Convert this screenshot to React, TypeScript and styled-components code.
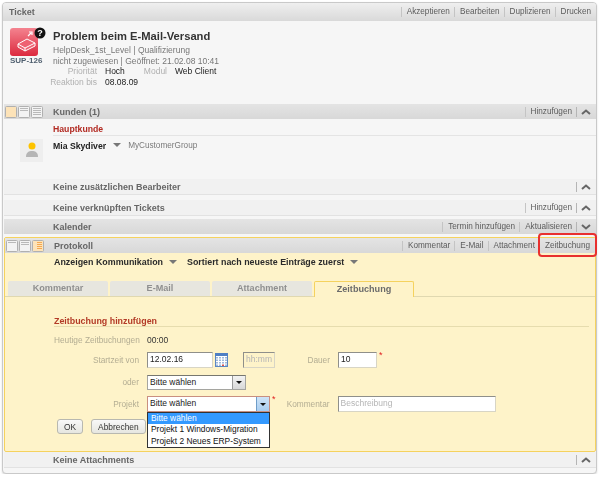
import React from 'react';
import styled, { createGlobalStyle } from 'styled-components';

const Global = createGlobalStyle`
  html, body {
    margin: 0;
    padding: 0;
    background: #ffffff;
  }
  body {
    font-family: "Liberation Sans", Arial, sans-serif;
    font-size: 8.5px;
    color: #333333;
  }
`;

const Frame = styled.div`
  position: relative;
  box-sizing: border-box;
  width: 595px;
  height: 472px;
  margin: 2px 0 0 2px;
  background: #f6f6f6;
  border: 1px solid #c9c9c9;
  border-radius: 4px;
  box-shadow: 0 1px 2px rgba(0, 0, 0, 0.15);
  filter: blur(0.4px);
`;

const TicketBar = styled.div`
  display: flex;
  align-items: center;
  justify-content: space-between;
  height: 18px;
  padding: 0 1px 0 6px;
  background: linear-gradient(#efefef, #d9d9d9);
  border-radius: 3px 3px 0 0;
`;

const TicketHeading = styled.span`
  font-size: 9px;
  font-weight: bold;
  color: #666666;
`;

const Actions = styled.div`
  display: flex;
  align-items: center;
`;

const Action = styled.span`
  display: block;
  height: 10px;
  line-height: 10px;
  padding: 0 4px 0 5px;
  border-left: 1px solid #c4c4c4;
  font-size: 8.2px;
  color: #5c5c5c;
  white-space: nowrap;
`;

const Chevron = styled.span`
  display: flex;
  align-items: center;
  justify-content: center;
  width: 17px;
  height: 10px;
  border-left: 1px solid #b5b5b5;
  color: #666666;
  svg {
    display: block;
  }
`;

const TicketBody = styled.div`
  display: flex;
  height: 83px;
  padding: 6px 0 0 7px;
  box-sizing: border-box;
`;

const TicketIconColumn = styled.div`
  width: 43px;
  flex: none;
`;

const TicketIcon = styled.svg`
  display: block;
  width: 39px;
  height: 30px;
`;

const TicketKey = styled.div`
  margin-top: -1px;
  width: 32px;
  font-size: 8px;
  line-height: 10px;
  font-weight: bold;
  color: #4f5f6f;
  white-space: nowrap;
  text-align: center;
`;

const TicketInfo = styled.div`
  display: flex;
  flex-direction: column;
  padding-top: 2px;
`;

const Title = styled.h1`
  margin: 0 0 2px;
  font-size: 11.2px;
  line-height: 14px;
  font-weight: bold;
  color: #333333;
`;

const InfoLine = styled.div`
  font-size: 8.5px;
  line-height: 10.7px;
  color: #777777;
`;

const MetaGrid = styled.div`
  display: grid;
  grid-template-columns: 44px 24px 30px auto;
  column-gap: 8px;
  line-height: 11px;
  font-size: 8.5px;
  justify-content: start;
`;

const MetaLabel = styled.span`
  color: #b0b0b0;
  text-align: right;
  white-space: nowrap;
  direction: rtl;
`;

const MetaValue = styled.span`
  color: #222222;
  white-space: nowrap;
`;

const Bar = styled.div<{ $tone?: 'dark' | 'light' }>`
  display: flex;
  align-items: center;
  box-sizing: border-box;
  height: ${(p) => (p.$tone === 'light' ? 16 : 15)}px;
  margin: 0 0 0 1px;
  padding-right: 2px;
  background: ${(p) => (p.$tone === 'light' ? '#f1f1f1' : 'linear-gradient(#e4e4e4, #d8d8d8)')};
  border-bottom: ${(p) => (p.$tone === 'light' ? '1px solid #e2e2e2' : 'none')};
`;

const ToggleGroup = styled.div`
  display: flex;
  gap: 1px;
  width: 49px;
  padding-left: 1px;
  box-sizing: border-box;
  flex: none;
`;

const BarTitle = styled.span`
  flex: 1;
  font-size: 9px;
  font-weight: bold;
  color: #666666;
  white-space: nowrap;
`;

const Toggle = styled.svg`
  display: block;
  width: 12px;
  height: 12px;
`;

const CustomerBody = styled.div`
  height: 60px;
  padding: 5px 0 0 50px;
  box-sizing: border-box;
`;

const SmallHeading = styled.div`
  font-size: 8.7px;
  line-height: 11px;
  font-weight: bold;
  color: #b22a22;
  border-bottom: 1px solid #e4e4e4;
`;

const CustomerRow = styled.div`
  display: flex;
  align-items: flex-start;
  gap: 7px;
  margin: 3px 0 0 -33px;
`;

const Avatar = styled.svg`
  display: block;
  width: 23px;
  height: 23px;
  flex: none;
  margin-right: 3px;
`;

const CustomerName = styled.span`
  font-size: 8.7px;
  line-height: 14px;
  font-weight: bold;
  color: #222222;
`;

const CustomerGroup = styled.span`
  font-size: 8.2px;
  line-height: 14px;
  color: #7a7a7a;
`;

const Caret = styled.i`
  display: inline-block;
  width: 0;
  height: 0;
  border-style: solid;
  border-width: 4px 4px 0;
  border-color: #777777 transparent transparent;
`;

const CaretCell = styled.span`
  display: flex;
  align-items: center;
  height: 12px;
`;

const Gap = styled.div<{ $h: number }>`
  height: ${(p) => p.$h}px;
`;

const Protokoll = styled.div`
  height: 215px;
  margin-left: 1px;
  border: 1px solid #f5d25e;
  border-radius: 2px;
  background: #fef3c9;
  box-sizing: border-box;
`;

const ProtokollBar = styled.div`
  display: flex;
  align-items: center;
  height: 15px;
  padding-right: 1px;
  background: linear-gradient(#e4e4e4, #d8d8d8);
`;

const Filters = styled.div`
  display: flex;
  align-items: center;
  gap: 6px;
  height: 17px;
  padding-left: 49px;
  font-size: 8.9px;
  font-weight: bold;
  color: #2b2b2b;
  span + i + span {
    margin-left: 4px;
  }
`;

const Tabs = styled.div`
  display: flex;
  gap: 2px;
  height: 15px;
  margin-top: 11px;
  padding-left: 3px;
  border-bottom: 1px solid #e0d8b0;
`;

const Tab = styled.div<{ $active?: boolean }>`
  box-sizing: border-box;
  width: 100px;
  height: ${(p) => (p.$active ? '16px' : '15px')};
  line-height: ${(p) => (p.$active ? '14px' : '15px')};
  text-align: center;
  font-size: 9.1px;
  font-weight: bold;
  background: ${(p) => (p.$active ? '#fef3c9' : '#e7e6df')};
  color: ${(p) => (p.$active ? '#6b6b6b' : '#8f8f8f')};
  border: ${(p) => (p.$active ? '1px solid #f5d25e' : 'none')};
  border-bottom: none;
  border-radius: 2px 2px 0 0;
`;

const Form = styled.div`
  padding: 19px 0 0 49px;
`;

const FormHeading = styled.div`
  margin-right: 6px;
  font-size: 8.9px;
  line-height: 10px;
  font-weight: bold;
  color: #b33a26;
  border-bottom: 1px solid #e6dcae;
`;

const Row = styled.div<{ $h: number }>`
  display: flex;
  align-items: center;
  height: ${(p) => p.$h}px;
`;

const FieldLabel = styled.label<{ $w?: number; $left?: boolean }>`
  flex: none;
  width: ${(p) => p.$w ?? 85}px;
  margin-right: 8px;
  font-size: 8.3px;
  color: #b3ad93;
  text-align: ${(p) => (p.$left ? 'left' : 'right')};
  white-space: nowrap;
`;

const StaticValue = styled.span`
  font-size: 8.5px;
  color: #333333;
`;

const Input = styled.div<{ $w: number; $muted?: boolean; $hint?: boolean }>`
  box-sizing: border-box;
  width: ${(p) => p.$w}px;
  height: 16px;
  flex: none;
  margin-left: ${(p) => (p.$hint ? 15 : 0)}px;
  line-height: 13px;
  padding-left: 2px;
  background: ${(p) => (p.$hint ? 'transparent' : '#ffffff')};
  border: 1px solid #d8d5c5;
  border-top-color: #8f8f8a;
  border-left-color: #8f8f8a;
  font-size: 8.5px;
  color: ${(p) => (p.$muted || p.$hint ? '#b5b5b5' : '#222222')};
`;

const Star = styled.sup`
  align-self: flex-start;
  margin: 2px 0 0 2px;
  font-size: 9px;
  line-height: 8px;
  color: #e02020;
`;

const Select = styled.div<{ $w: number; $open?: boolean }>`
  position: relative;
  box-sizing: border-box;
  display: flex;
  justify-content: space-between;
  flex: none;
  width: ${(p) => p.$w}px;
  height: ${(p) => (p.$open ? 16 : 15)}px;
  background: #ffffff;
  border: 1px solid ${(p) => (p.$open ? '#c98f80' : '#a5a5a0')};
  border-top-color: ${(p) => (p.$open ? '#c98f80' : '#77776f')};
  font-size: 8.5px;
  line-height: 13px;
  padding-left: 2px;
  color: #222222;
`;

const SelectArrow = styled.span<{ $open?: boolean }>`
  display: flex;
  align-items: center;
  justify-content: center;
  width: 12px;
  background: ${(p) => (p.$open ? 'linear-gradient(#cfe4f7, #a8cdf0)' : 'linear-gradient(#f3f3f3, #d8d8d8)')};
  border-left: 1px solid ${(p) => (p.$open ? '#6f9dc8' : '#9a9a9a')};
  &::after {
    content: '';
    border-style: solid;
    border-width: 3px 3px 0;
    border-color: #111111 transparent transparent;
  }
`;

const Dropdown = styled.ul`
  position: absolute;
  left: -1px;
  top: 15px;
  z-index: 2;
  width: 123px;
  margin: 0;
  padding: 0;
  box-sizing: border-box;
  list-style: none;
  background: #ffffff;
  border: 1px solid #333333;
`;

const DropdownItem = styled.li<{ $active?: boolean }>`
  height: 11.4px;
  line-height: 11.4px;
  padding-left: 3px;
  font-size: 8.4px;
  white-space: nowrap;
  color: ${(p) => (p.$active ? '#ffffff' : '#111111')};
  background: ${(p) => (p.$active ? '#3399ff' : 'transparent')};
`;

const ButtonRow = styled.div`
  display: flex;
  gap: 8px;
  margin: 4px 0 0 3px;
`;

const Button = styled.button`
  box-sizing: border-box;
  height: 15px;
  padding: 0 6px;
  min-width: 24px;
  background: linear-gradient(#f8f8f8, #e6e6e0);
  border: 1px solid #b8b8b0;
  border-radius: 3px;
  font-family: inherit;
  font-size: 8.4px;
  color: #333333;
`;

const Highlight = styled.div`
  position: absolute;
  left: 535px;
  top: 230px;
  width: 59px;
  height: 24px;
  border: 2px solid #e8302e;
  border-radius: 4px;
  box-sizing: border-box;
`;

const Calendar = styled.svg`
  display: block;
  flex: none;
  width: 13px;
  height: 14px;
  margin-left: 2px;
`;

function ChevronIcon({ up = true }: { up?: boolean }) {
  return (
    <Chevron>
      <svg width="10" height="6" viewBox="0 0 10 6">
        <path d={up ? 'M1 5 L5 1.5 L9 5' : 'M1 1 L5 4.5 L9 1'} fill="none" stroke="currentColor" strokeWidth="2" />
      </svg>
    </Chevron>
  );
}

function ToggleIcon({ lines, active }: { lines: number; active?: boolean }) {
  const rows = [3, 5, 7, 9].slice(0, lines);
  return (
    <Toggle viewBox="0 0 12 12">
      <rect x="0.5" y="0.5" width="11" height="11" rx="1" fill={active ? '#fde3b8' : '#f3f3f3'} stroke="#b0b0b0" />
      {rows.map((y) => (
        <rect key={y} x={active && lines === 4 ? 5 : 2} y={y - 1} width={active && lines === 4 ? 5 : 8} height="1" fill={active ? '#f5a850' : '#b9b9b9'} />
      ))}
    </Toggle>
  );
}

function Views({ active }: { active: number }) {
  return (
    <ToggleGroup>
      <ToggleIcon lines={active === 0 ? 0 : 1} active={active === 0} />
      <ToggleIcon lines={2} />
      <ToggleIcon lines={4} active={active === 2} />
    </ToggleGroup>
  );
}

function BarActions({ items, chevron }: { items: string[]; chevron?: 'up' | 'down' }) {
  return (
    <Actions>
      {items.map((item) => (
        <Action key={item}>{item}</Action>
      ))}
      {chevron && <ChevronIcon up={chevron === 'up'} />}
    </Actions>
  );
}

function CalendarIcon() {
  return (
    <Calendar viewBox="0 0 13 14">
      <rect x="0.5" y="0.5" width="12" height="13" fill="#ffffff" stroke="#5b86c2" />
      <rect x="0" y="0" width="13" height="3" fill="#4f7fc4" />
      {[4.5, 7, 9.5, 12].map((y) =>
        [1, 4, 7, 10].map((x) => (
          <rect key={`${x}-${y}`} x={x} y={y - 0.5} width="2" height="1.5" fill={x === 7 && y === 12 ? '#d9534f' : '#9db8dc'} />
        )),
      )}
    </Calendar>
  );
}

export default function App() {
  return (
    <>
      <Global />
      <Frame>
        <TicketBar>
          <TicketHeading>Ticket</TicketHeading>
          <BarActions items={['Akzeptieren', 'Bearbeiten', 'Duplizieren', 'Drucken']} />
        </TicketBar>

        <TicketBody>
          <TicketIconColumn>
            <TicketIcon viewBox="0 0 39 30">
              <defs>
                <linearGradient id="red" x1="0" y1="0" x2="0" y2="1">
                  <stop offset="0" stopColor="#f4838f" />
                  <stop offset="1" stopColor="#dc2a3f" />
                </linearGradient>
              </defs>
              <rect x="0" y="1" width="28" height="28" rx="3" fill="url(#red)" />
              <path d="M8 17 L17 12 L25 16 L25 19 L15 24 L8 20 Z" fill="#ee6272" stroke="#ffffff" strokeWidth="1" />
              <path d="M8 17 L15 21 L25 16 M15 21 L15 24" fill="none" stroke="#ffffff" strokeWidth="1" />
              <path d="M18 9 L21 6 M19 5 h3 v3" fill="none" stroke="#ffffff" strokeWidth="1.2" />
              <circle cx="30" cy="6" r="5.5" fill="#111111" />
              <text x="30" y="9.3" textAnchor="middle" fontSize="9" fontWeight="bold" fill="#ffffff" fontFamily="Liberation Sans">?</text>
            </TicketIcon>
            <TicketKey>SUP-126</TicketKey>
          </TicketIconColumn>
          <TicketInfo>
            <Title>Problem beim E-Mail-Versand</Title>
            <InfoLine>HelpDesk_1st_Level | Qualifizierung</InfoLine>
            <InfoLine>nicht zugewiesen | Geöffnet: 21.02.08 10:41</InfoLine>
            <MetaGrid>
              <MetaLabel>Priorität</MetaLabel>
              <MetaValue>Hoch</MetaValue>
              <MetaLabel>Modul</MetaLabel>
              <MetaValue>Web Client</MetaValue>
              <MetaLabel>Reaktion bis</MetaLabel>
              <MetaValue>08.08.09</MetaValue>
            </MetaGrid>
          </TicketInfo>
        </TicketBody>

        <Bar>
          <Views active={0} />
          <BarTitle>Kunden (1)</BarTitle>
          <BarActions items={['Hinzufügen']} chevron="up" />
        </Bar>
        <CustomerBody>
          <SmallHeading>Hauptkunde</SmallHeading>
          <CustomerRow>
            <Avatar viewBox="0 0 23 23">
              <rect width="23" height="23" fill="#eeeeee" />
              <circle cx="12" cy="7" r="3.5" fill="#fdc300" />
              <path d="M6 18 C6 13 9 12 12 12 C15 12 18 13 18 18 Z" fill="#b5b5b5" />
            </Avatar>
            <CustomerName>Mia Skydiver</CustomerName>
            <CaretCell><Caret /></CaretCell>
            <CustomerGroup>MyCustomerGroup</CustomerGroup>
          </CustomerRow>
        </CustomerBody>

        <Bar $tone="light">
          <ToggleGroup />
          <BarTitle>Keine zusätzlichen Bearbeiter</BarTitle>
          <BarActions items={[]} chevron="up" />
        </Bar>
        <Gap $h={5} />
        <Bar $tone="light">
          <ToggleGroup />
          <BarTitle>Keine verknüpften Tickets</BarTitle>
          <BarActions items={['Hinzufügen']} chevron="up" />
        </Bar>
        <Gap $h={3} />
        <Bar>
          <ToggleGroup />
          <BarTitle>Kalender</BarTitle>
          <BarActions items={['Termin hinzufügen', 'Aktualisieren']} chevron="down" />
        </Bar>
        <Gap $h={3} />

        <Protokoll>
          <ProtokollBar>
            <Views active={2} />
            <BarTitle>Protokoll</BarTitle>
            <BarActions items={['Kommentar', 'E-Mail', 'Attachment', 'Zeitbuchung']} />
          </ProtokollBar>
          <Filters>
            <span>Anzeigen Kommunikation</span>
            <Caret />
            <span>Sortiert nach neueste Einträge zuerst</span>
            <Caret />
          </Filters>
          <Tabs>
            <Tab>Kommentar</Tab>
            <Tab>E-Mail</Tab>
            <Tab>Attachment</Tab>
            <Tab $active>Zeitbuchung</Tab>
          </Tabs>
          <Form>
            <FormHeading>Zeitbuchung hinzufügen</FormHeading>
            <Gap $h={4} />
            <Row $h={18}>
              <FieldLabel $left>Heutige Zeitbuchungen</FieldLabel>
              <StaticValue>00:00</StaticValue>
            </Row>
            <Row $h={22}>
              <FieldLabel>Startzeit von</FieldLabel>
              <Input $w={66}>12.02.16</Input>
              <CalendarIcon />
              <Input $w={32} $hint>hh:mm</Input>
              <FieldLabel $w={55}>Dauer</FieldLabel>
              <Input $w={39}>10</Input>
              <Star>*</Star>
            </Row>
            <Row $h={22}>
              <FieldLabel>oder</FieldLabel>
              <Select $w={99}>
                Bitte wählen
                <SelectArrow />
              </Select>
            </Row>
            <Row $h={22}>
              <FieldLabel>Projekt</FieldLabel>
              <Select $w={123} $open>
                Bitte wählen
                <SelectArrow $open />
                <Dropdown>
                  <DropdownItem $active>Bitte wählen</DropdownItem>
                  <DropdownItem>Projekt 1 Windows-Migration</DropdownItem>
                  <DropdownItem>Projekt 2 Neues ERP-System</DropdownItem>
                </Dropdown>
              </Select>
              <Star>*</Star>
              <FieldLabel $w={54}>Kommentar</FieldLabel>
              <Input $w={158} $muted>Beschreibung</Input>
            </Row>
            <ButtonRow>
              <Button>OK</Button>
              <Button>Abbrechen</Button>
            </ButtonRow>
          </Form>
        </Protokoll>

        <Bar $tone="light">
          <ToggleGroup />
          <BarTitle>Keine Attachments</BarTitle>
          <BarActions items={[]} chevron="up" />
        </Bar>

        <Highlight />
      </Frame>
    </>
  );
}
